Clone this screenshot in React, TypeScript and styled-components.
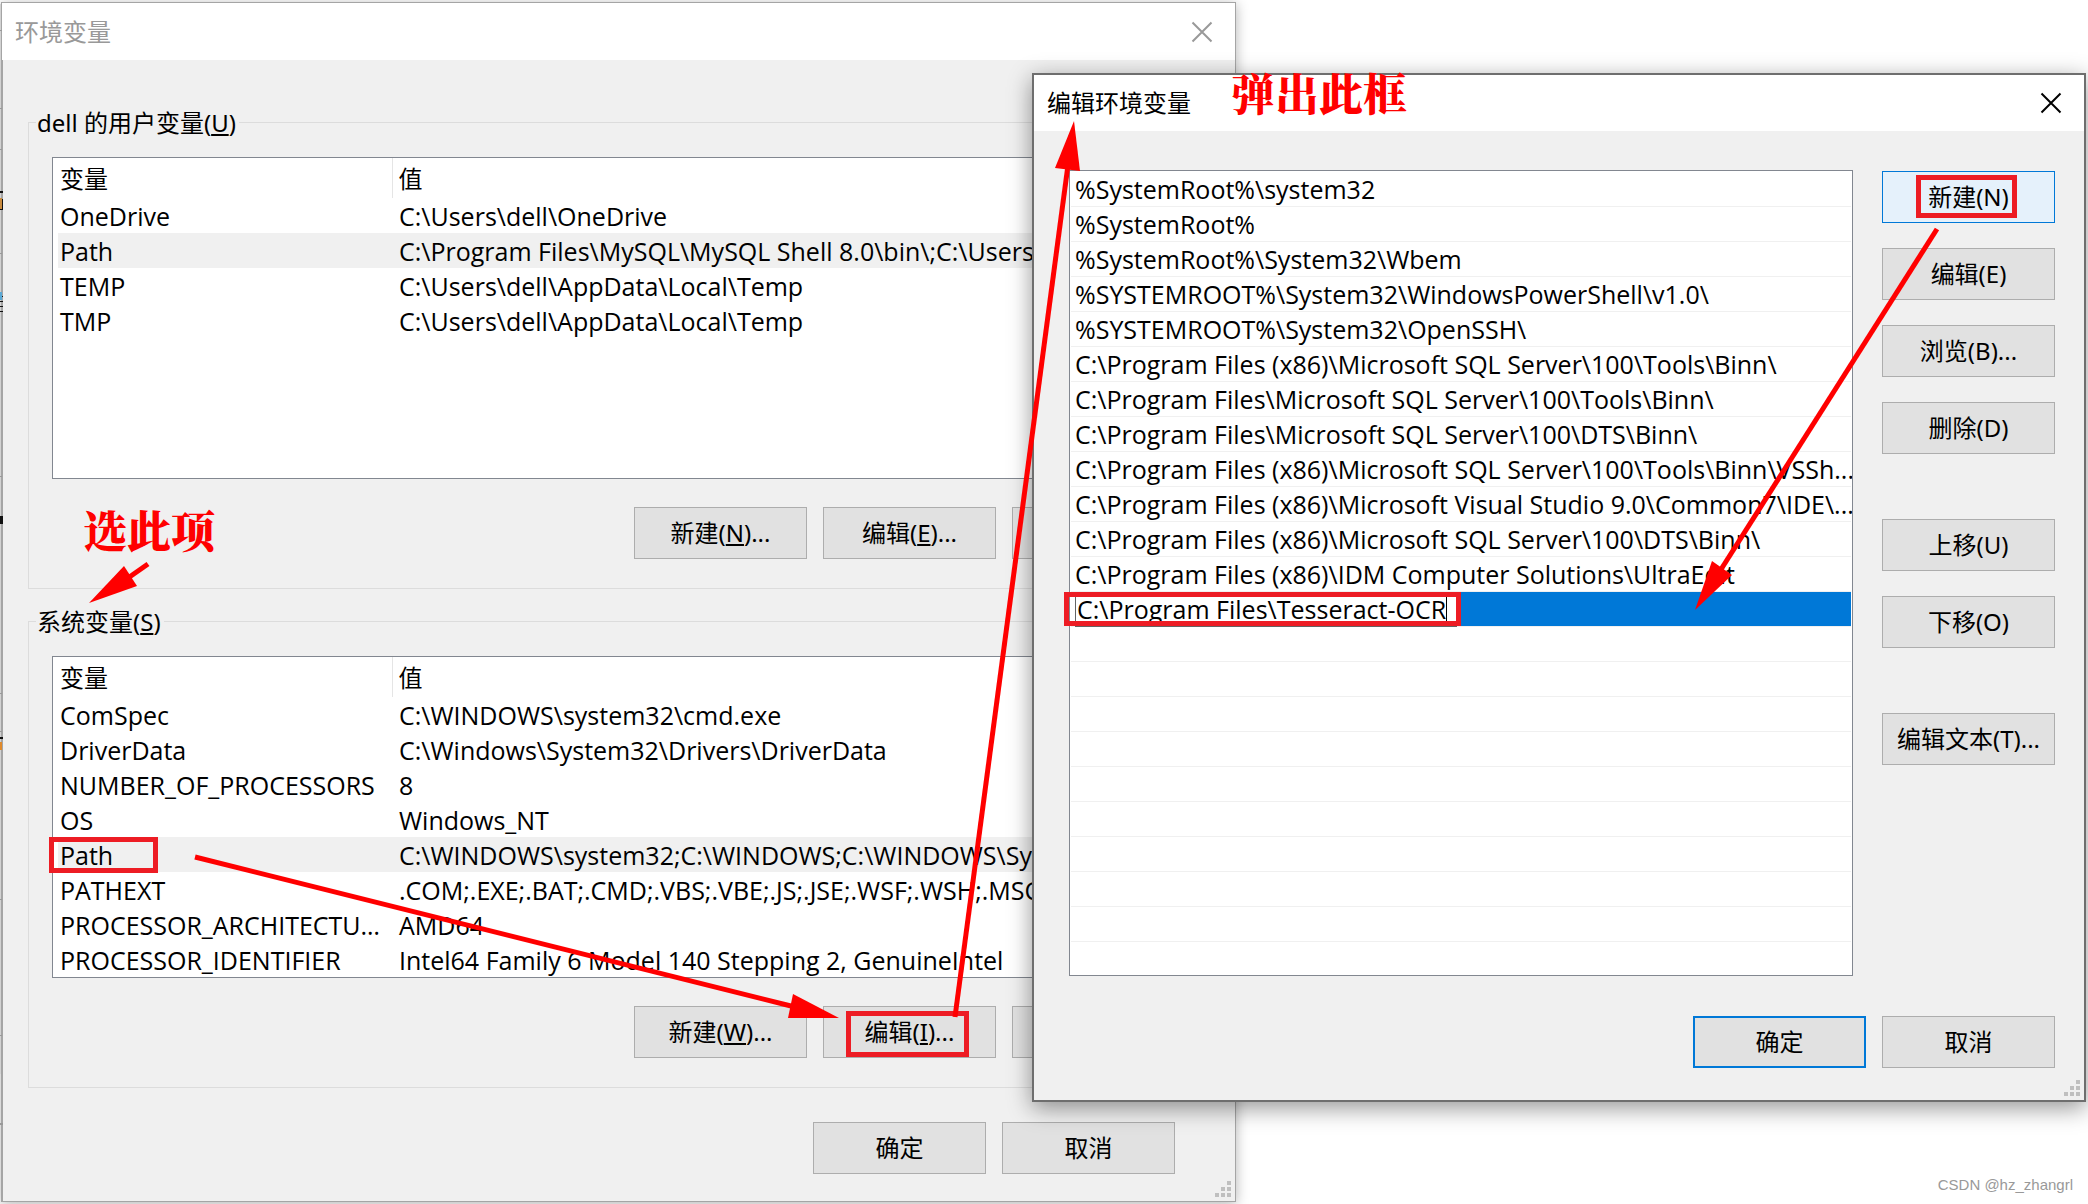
import React from "react";
import styled, { createGlobalStyle, css } from "styled-components";

const GlobalStyle = createGlobalStyle`
  *, *::before, *::after { box-sizing: border-box; }
  body {
    margin: 0;
    background: #fff;
    color: #000;
    font: 24px/34px "Noto Sans", "Noto Sans CJK SC", sans-serif;
  }
`;

const listFont = css`
  font-family: "Open Sans", "Noto Sans CJK SC", sans-serif;
  font-size: 25px;
`;

const Desktop = styled.div`
  position: relative;
  min-height: 100vh;
  overflow: hidden;
`;

const Backdrop = styled.svg`
  position: absolute;
  left: 0;
  top: 0;
`;

const Window = styled.section<{ $active?: boolean }>`
  position: absolute;
  display: flex;
  flex-direction: column;
  background: #f0f0f0;
  ${(p) =>
    p.$active
      ? css`
          left: 1032px;
          top: 73px;
          width: 1054px;
          border: 2px solid #6e6e6e;
          box-shadow: 0 6px 22px rgba(0, 0, 0, 0.42);
        `
      : css`
          left: 1px;
          top: 2px;
          width: 1235px;
          border: 1px solid #a5a5a5;
          box-shadow: 0 2px 12px rgba(0, 0, 0, 0.3);
        `}
`;

const TitleBar = styled.header<{ $active?: boolean }>`
  display: flex;
  align-items: center;
  justify-content: space-between;
  height: ${(p) => (p.$active ? 56 : 57)}px;
  padding: 0 22px 0 13px;
  background: #fff;
  color: ${(p) => (p.$active ? "#000" : "#999")};
`;

const Title = styled.h1`
  margin: 0;
  font: inherit;
`;

const CloseButton = styled.button`
  display: flex;
  padding: 0;
  border: 0;
  background: none;
  color: inherit;
`;

const Body = styled.div`
  display: flex;
  flex-direction: column;
  padding: 44px 26px 0 25px;
  border-left: 1px solid #a5a5a5;
`;

const Group = styled.fieldset`
  display: flex;
  flex-direction: column;
  min-width: 0;
  height: 485px;
  margin: 0 0 14px;
  padding: 17px 23px 0;
  border: 1px solid #dcdcdc;
`;

const Legend = styled.legend`
  margin-left: -16px;
  padding: 2px 3px 0 1px;
`;

const ListBox = styled.div`
  height: 322px;
  overflow: hidden;
  border: 1px solid #828790;
  background: #fff;
`;

const Table = styled.table`
  width: 100%;
  table-layout: fixed;
  border-collapse: collapse;
`;

const cell = css`
  padding: 0 6px 0 7px;
  overflow: hidden;
  font-weight: 400;
  text-align: left;
  text-overflow: ellipsis;
  white-space: nowrap;
`;

const HeadCell = styled.th<{ $width?: number }>`
  ${cell}
  width: ${(p) => (p.$width ? p.$width + "px" : "auto")};
  height: 40px;
  padding-top: 2px;
  & + & {
    border-left: 1px solid #e5e5e5;
    padding-left: 6px;
  }
`;

const Row = styled.tr<{ $selected?: boolean }>`
  height: 35px;
  background: ${(p) =>
    p.$selected ? "linear-gradient(to right, #fff 5px, #f0f0f0 5px)" : "none"};
`;

const Cell = styled.td`
  ${cell}
  ${listFont}
`;

const Button = styled.button<{ $look?: "hot" | "default" }>`
  width: 173px;
  height: 52px;
  padding: 0;
  border: 1px solid #adadad;
  background: #e1e1e1;
  color: #000;
  font: inherit;
  white-space: nowrap;
  ${(p) => p.$look === "hot" && "border-color: #0078d7; background: #e5f1fb;"}
  ${(p) => p.$look === "default" && "border: 2px solid #0078d7;"}
`;

const ButtonRow = styled.div<{ $top: number }>`
  display: flex;
  justify-content: flex-end;
  gap: 16px;
  margin-top: ${(p) => p.$top}px;
`;

const MainFooter = styled(ButtonRow)`
  padding: 0 34px 27px 0;
`;

const DialogBody = styled.div`
  display: grid;
  grid-template-columns: minmax(0, 1fr) 173px;
  column-gap: 29px;
  padding: 39px 29px 32px 35px;
`;

const Paths = styled.ul`
  height: 806px;
  margin: 0;
  padding: 1px;
  overflow: hidden;
  list-style: none;
  border: 1px solid #828790;
  background: #fff;
  ${listFont}
`;

const PathRow = styled.li<{ $selected?: boolean }>`
  height: 35px;
  padding: 0 0 0 4px;
  border-bottom: 1px solid #f0f0f0;
  white-space: nowrap;
  &:last-child { border: 0; }
  ${(p) =>
    p.$selected &&
    css`
      display: flex;
      background: linear-gradient(to right, #fff 4px, #0078d7 4px) padding-box;
    `}
`;

const PathInput = styled.input`
  width: 382px;
  height: 35px;
  padding: 0 2px 2px 1px;
  border: 1px solid #646464;
  border-radius: 0;
  outline: 0;
  background: #fff;
  color: #000;
  font: inherit;
`;

const SideButtons = styled.div`
  display: flex;
  flex-direction: column;
  gap: 25px;
  padding-top: 1px;
`;

const SideGroup = styled(SideButtons)`
  padding: 0 0 40px;
`;

const DialogFooter = styled(ButtonRow)`
  grid-column: 1 / -1;
`;

const Grip = styled.svg`
  position: absolute;
  right: 4px;
  bottom: 4px;
`;

const Overlay = styled.svg`
  position: absolute;
  left: 0;
  top: 0;
  pointer-events: none;
`;

const Callout = styled.strong<{ $x: number; $y: number }>`
  position: absolute;
  left: ${(p) => p.$x}px;
  top: ${(p) => p.$y}px;
  color: #f00;
  font: 900 44px/52px "Noto Serif CJK SC", "Noto Sans CJK SC", serif;
`;

const Watermark = styled.span`
  position: absolute;
  right: 15px;
  bottom: 8px;
  color: #999;
  font: 15px/22px "Liberation Sans", sans-serif;
`;

const CloseIcon = () => (
  <svg width="22" height="22" viewBox="0 0 22 22" fill="none" stroke="currentColor" strokeWidth="2">
    <path d="M1.5 1.5L20.5 20.5M20.5 1.5L1.5 20.5" />
  </svg>
);

const gripDots = [[12, 0], [6, 6], [12, 6], [0, 12], [6, 12], [12, 12]];

const ResizeGrip = () => (
  <Grip width="16" height="16" fill="#bfbfbf" aria-hidden>
    {gripDots.map(([x, y]) => (
      <rect key={`${x}-${y}`} x={x} y={y} width="4" height="4" />
    ))}
  </Grip>
);

type Variable = { name: string; value: string };

const userVars: Variable[] = [
  { name: "OneDrive", value: "C:\\Users\\dell\\OneDrive" },
  { name: "Path", value: "C:\\Program Files\\MySQL\\MySQL Shell 8.0\\bin\\;C:\\Users\\" },
  { name: "TEMP", value: "C:\\Users\\dell\\AppData\\Local\\Temp" },
  { name: "TMP", value: "C:\\Users\\dell\\AppData\\Local\\Temp" },
];

const systemVars: Variable[] = [
  { name: "ComSpec", value: "C:\\WINDOWS\\system32\\cmd.exe" },
  { name: "DriverData", value: "C:\\Windows\\System32\\Drivers\\DriverData" },
  { name: "NUMBER_OF_PROCESSORS", value: "8" },
  { name: "OS", value: "Windows_NT" },
  { name: "Path", value: "C:\\WINDOWS\\system32;C:\\WINDOWS;C:\\WINDOWS\\Sy" },
  { name: "PATHEXT", value: ".COM;.EXE;.BAT;.CMD;.VBS;.VBE;.JS;.JSE;.WSF;.WSH;.MSC" },
  { name: "PROCESSOR_ARCHITECTURE", value: "AMD64" },
  { name: "PROCESSOR_IDENTIFIER", value: "Intel64 Family 6 Model 140 Stepping 2, GenuineIntel" },
];

const paths = [
  "%SystemRoot%\\system32",
  "%SystemRoot%",
  "%SystemRoot%\\System32\\Wbem",
  "%SYSTEMROOT%\\System32\\WindowsPowerShell\\v1.0\\",
  "%SYSTEMROOT%\\System32\\OpenSSH\\",
  "C:\\Program Files (x86)\\Microsoft SQL Server\\100\\Tools\\Binn\\",
  "C:\\Program Files\\Microsoft SQL Server\\100\\Tools\\Binn\\",
  "C:\\Program Files\\Microsoft SQL Server\\100\\DTS\\Binn\\",
  "C:\\Program Files (x86)\\Microsoft SQL Server\\100\\Tools\\Binn\\VSSh...",
  "C:\\Program Files (x86)\\Microsoft Visual Studio 9.0\\Common7\\IDE\\...",
  "C:\\Program Files (x86)\\Microsoft SQL Server\\100\\DTS\\Binn\\",
  "C:\\Program Files (x86)\\IDM Computer Solutions\\UltraEdit",
];

const blankRows = Array.from({ length: 10 }, (_, i) => i);

const VariableTable = ({ rows }: { rows: Variable[] }) => (
  <ListBox>
    <Table>
      <thead>
        <tr>
          <HeadCell $width={339}>变量</HeadCell>
          <HeadCell>值</HeadCell>
        </tr>
      </thead>
      <tbody>
        {rows.map((v) => (
          <Row key={v.name} $selected={v.name === "Path"}>
            <Cell>{v.name}</Cell>
            <Cell>{v.value}</Cell>
          </Row>
        ))}
      </tbody>
    </Table>
  </ListBox>
);

export default function App() {
  return (
    <Desktop>
      <GlobalStyle />
      <Window>
        <TitleBar>
          <Title>环境变量</Title>
          <CloseButton aria-label="关闭">
            <CloseIcon />
          </CloseButton>
        </TitleBar>
        <Body>
          <Group>
            <Legend>dell 的用户变量(<u>U</u>)</Legend>
            <VariableTable rows={userVars} />
            <ButtonRow $top={28}>
              <Button>新建(<u>N</u>)...</Button>
              <Button>编辑(<u>E</u>)...</Button>
              <Button aria-label="删除" />
            </ButtonRow>
          </Group>
          <Group>
            <Legend>系统变量(<u>S</u>)</Legend>
            <VariableTable rows={systemVars} />
            <ButtonRow $top={28}>
              <Button>新建(<u>W</u>)...</Button>
              <Button>编辑(<u>I</u>)...</Button>
              <Button aria-label="删除" />
            </ButtonRow>
          </Group>
          <MainFooter $top={20}>
            <Button>确定</Button>
            <Button>取消</Button>
          </MainFooter>
        </Body>
        <ResizeGrip />
      </Window>

      {/* Sliver of the window behind, visible along the left edge */}
      <Backdrop width="3" height="1204" aria-hidden>
        <rect width="1" height="1070" y="4" fill="#d2d2d2" />
        <g fill="#999">
          <rect y="30" width="2" height="1" />
          <rect y="108" width="2" height="1" />
          <rect y="149" width="2" height="1" />
          <rect y="253" width="2" height="1" />
          <rect y="476" width="2" height="1" />
          <rect y="693" width="2" height="1" />
          <rect y="731" width="2" height="1" />
          <rect y="899" width="2" height="1" />
          <rect y="1035" width="2" height="1" />
          <rect y="1123" width="3" height="2" />
        </g>
        <g fill="#111">
          <rect y="191" width="3" height="2" />
          <rect x="2" y="199" width="1" height="10" />
          <rect y="209" width="3" height="1" />
          <rect y="296" width="3" height="1" />
          <rect y="301" width="3" height="1" />
          <rect y="306" width="3" height="1" />
          <rect y="311" width="3" height="1" />
          <rect y="516" width="3" height="8" />
          <rect y="737" width="3" height="2" />
        </g>
        <rect y="198" width="2" height="11" fill="#c98b3f" />
        <rect y="292" width="2" height="8" fill="#5aa9d6" />
        <rect y="742" width="2" height="8" fill="#e08a2c" />
      </Backdrop>

      <Window $active>
        <TitleBar $active>
          <Title>编辑环境变量</Title>
          <CloseButton aria-label="关闭">
            <CloseIcon />
          </CloseButton>
        </TitleBar>
        <DialogBody>
          <Paths>
            {paths.map((p) => (
              <PathRow key={p}>{p}</PathRow>
            ))}
            <PathRow $selected>
              <PathInput aria-label="路径" defaultValue={"C:\\Program Files\\Tesseract-OCR"} />
            </PathRow>
            {blankRows.map((i) => (
              <PathRow key={i} />
            ))}
          </Paths>
          <SideButtons>
            <SideGroup>
              <Button $look="hot">新建(N)</Button>
              <Button>编辑(E)</Button>
              <Button>浏览(B)...</Button>
              <Button>删除(D)</Button>
            </SideGroup>
            <SideGroup>
              <Button>上移(U)</Button>
              <Button>下移(O)</Button>
            </SideGroup>
            <Button>编辑文本(T)...</Button>
          </SideButtons>
          <DialogFooter $top={40}>
            <Button $look="default">确定</Button>
            <Button>取消</Button>
          </DialogFooter>
        </DialogBody>
        <ResizeGrip />
      </Window>

      <Overlay width="2088" height="1204" viewBox="0 0 2088 1204" aria-hidden>
        <g fill="none" stroke="#ed1c24" strokeWidth="5">
          <rect x="51.5" y="839.5" width="104" height="31" />
          <rect x="848.5" y="1013.5" width="118" height="41" />
          <rect x="1918.5" y="177.5" width="96" height="38" />
          <rect x="1066.5" y="594.5" width="392" height="29" />
        </g>
        <g fill="none" stroke="#f00" strokeWidth="5">
          <path d="M195 857L795 1007" />
          <path d="M955 1017L1068 165" />
          <path d="M1937 229L1720 571" />
          <path d="M148 564L128 578" />
        </g>
        <g fill="#f00">
          <path d="M839 1018L793 994L788 1018Z" />
          <path d="M1074 121L1055 168L1080 171Z" />
          <path d="M1695 610L1712 561L1732 575Z" />
          <path d="M89 603L124 566L137 586Z" />
        </g>
        <path d="M1446.5 597V621" stroke="#000" />
      </Overlay>
      <Callout $x={83} $y={503}>选此项</Callout>
      <Callout $x={1231} $y={66}>弹出此框</Callout>
      <Watermark>CSDN @hz_zhangrl</Watermark>
    </Desktop>
  );
}
